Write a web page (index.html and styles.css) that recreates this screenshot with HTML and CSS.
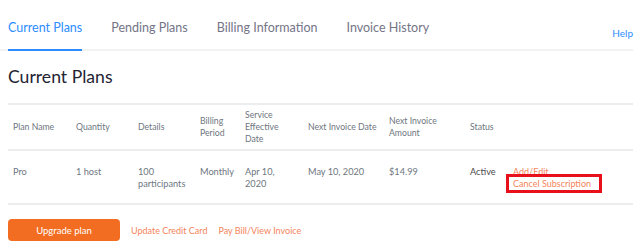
FILE: index.html
```html
<!DOCTYPE html>
<html>
<head>
<meta charset="utf-8">
<link rel="stylesheet" href="styles.css">
</head>
<body>
<div class="page">
  <nav class="tabs">
    <div class="tab-list">
      <a class="tab active">Current Plans</a>
      <a class="tab">Pending Plans</a>
      <a class="tab">Billing Information</a>
      <a class="tab">Invoice History</a>
    </div>
    <a class="help">Help</a>
  </nav>
  <h1 class="title">Current Plans</h1>
  <table class="plans">
    <colgroup>
      <col class="c1"><col class="c2"><col class="c3"><col class="c4"><col class="c5"><col class="c6"><col class="c7"><col class="c8"><col>
    </colgroup>
    <thead>
      <tr>
        <th>Plan Name</th>
        <th>Quantity</th>
        <th>Details</th>
        <th>Billing<br>Period</th>
        <th>Service<br>Effective<br>Date</th>
        <th>Next Invoice Date</th>
        <th>Next Invoice<br>Amount</th>
        <th>Status</th>
        <th></th>
      </tr>
    </thead>
    <tbody>
      <tr>
        <td>Pro</td>
        <td>1 host</td>
        <td>100<br>participants</td>
        <td>Monthly</td>
        <td>Apr 10,<br>2020</td>
        <td>May 10, 2020</td>
        <td>$14.99</td>
        <td class="status">Active</td>
        <td class="actions"><a class="link">Add/Edit</a><br><a class="link marked">Cancel Subscription</a></td>
      </tr>
    </tbody>
  </table>
  <div class="footer">
    <button class="upgrade">Upgrade plan</button>
    <a class="link">Update Credit Card</a>
    <a class="link">Pay Bill/View Invoice</a>
  </div>
</div>
</body>
</html>
```
FILE: styles.css
```css
* { box-sizing: border-box; }
html, body { margin: 0; padding: 0; background: #fff; }
body { font-family: Lato, "Open Sans", sans-serif; color: #6e7680; }
.page { width: 633px; }
.tabs {
  display: flex;
  justify-content: space-between;
  align-items: flex-end;
  border-bottom: 2px solid #f2f2f2;
  padding-left: 8px;
  height: 51px;
}
.tab-list { display: flex; gap: 29px; }
.tab {
  font-size: 12.5px;
  color: #747487;
  padding: 16px 0 11px;
  line-height: 20px;
  border-bottom: 2px solid transparent;
  margin-bottom: -2px;
  cursor: pointer;
}
.tab.active { color: #2d8cff; border-bottom-color: #2d8cff; }
.help { font-size: 10px; color: #2d8cff; padding-bottom: 10px; }
.title {
  margin: 15px 0 0 8px;
  font-size: 17.6px;
  font-weight: 400;
  color: #232333;
  line-height: 22px;
  padding-bottom: 15px;
}
.plans {
  margin-left: 8px;
  width: 625px;
  border-collapse: collapse;
  table-layout: fixed;
  font-size: 8.7px;
}
.c1 { width: 63px; } .c2 { width: 62px; } .c3 { width: 62px; } .c4 { width: 45px; }
.c5 { width: 63px; } .c6 { width: 81px; } .c7 { width: 81px; } .c8 { width: 43px; }
.plans thead tr { border-top: 2px solid #ededed; border-bottom: 2px solid #ededed; height: 46px; }
.plans th { font-weight: 400; text-align: left; padding: 0 5px; line-height: 12px; vertical-align: middle; }
.plans tbody tr { border-bottom: 2px solid #ededed; height: 54px; }
.plans td { vertical-align: top; padding: 15px 5px 0; line-height: 12px; font-size: 9.2px; }
.plans td.status { color: #4a4a4a; }
.link { color: #f4845b; cursor: pointer; font-size: 9px; }
.marked { position: relative; }
.marked::after {
  content: "";
  position: absolute;
  left: -7px; right: -11px; top: -4px; bottom: -4px;
  border: 3px solid #e8101a;
}
.footer {
  display: flex;
  align-items: center;
  gap: 11px;
  padding: 14px 0 0 8px;
}
.footer .link { font-size: 9px; }
.upgrade {
  width: 112px;
  height: 22px;
  border: none;
  border-radius: 4px;
  background: #f26d21;
  color: #fff;
  font-family: Lato, sans-serif;
  font-size: 9.5px;
  cursor: pointer;
}
```
